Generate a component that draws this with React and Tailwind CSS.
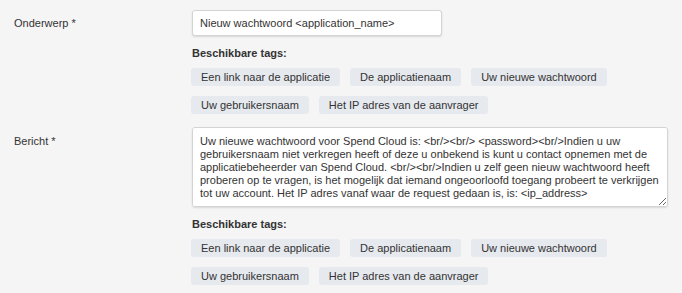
const tags = [
  ["Een link naar de applicatie", "De applicatienaam", "Uw nieuwe wachtwoord"],
  ["Uw gebruikersnaam", "Het IP adres van de aanvrager"],
];

const message =
  "Uw nieuwe wachtwoord voor Spend Cloud is: <br/><br/> <password><br/>Indien u uw gebruikersnaam niet verkregen heeft of deze u onbekend is kunt u contact opnemen met de applicatiebeheerder van Spend Cloud. <br/><br/>Indien u zelf geen nieuw wachtwoord heeft proberen op te vragen, is het mogelijk dat iemand ongeoorloofd toegang probeert te verkrijgen tot uw account. Het IP adres vanaf waar de request gedaan is, is: <ip_address>";

function Tags() {
  return (
    <div className="mt-[9px]">
      <div className="font-bold text-[11px] leading-[16px] text-[#333]">Beschikbare tags:</div>
      <div className="mt-[7px] flex flex-col gap-[10px]">
        {tags.map((row, i) => (
          <div key={i} className="flex gap-[10px] -ml-px">
            {row.map((t) => (
              <span key={t} className="h-[18px] px-[10px] rounded-[3px] bg-[#e6e9ee] text-[11px] leading-[18px] text-[#333]">
                {t}
              </span>
            ))}
          </div>
        ))}
      </div>
    </div>
  );
}

export default function App() {
  return (
    <div className="w-[682px] h-[293px] bg-[#f5f5f5] font-['Liberation_Sans',Arial,sans-serif] text-[#333] pt-[10px]">
      <div className="flex">
        <div className="w-[192px] pl-[14px] pt-[6px] text-[11px] leading-[14px]">Onderwerp *</div>
        <div>
          <input
            defaultValue="Nieuw wachtwoord <application_name>"
            className="w-[250px] h-[26px] px-[7px] bg-white border border-[#d4d4d4] rounded-[3px] shadow-[0_1px_2px_rgba(0,0,0,0.12)] text-[11px] text-[#333] outline-none"
          />
          <Tags />
        </div>
      </div>
      <div className="flex mt-[13px]">
        <div className="w-[192px] pl-[14px] pt-[7px] text-[11px] leading-[14px]">Bericht *</div>
        <div>
          <textarea
            defaultValue={message}
            className="block w-[476px] h-[80px] px-[7px] py-[7px] bg-white border border-[#d4d4d4] rounded-[3px] shadow-[0_1px_2px_rgba(0,0,0,0.12)] text-[11px] leading-[13px] text-[#333] outline-none"
          />
          <Tags />
        </div>
      </div>
    </div>
  );
}
